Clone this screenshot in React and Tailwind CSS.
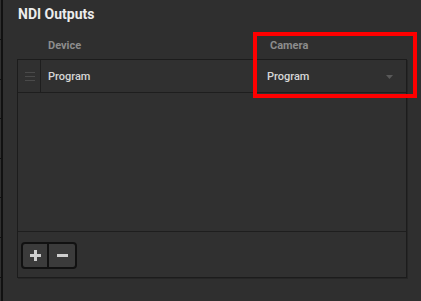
export default function App() {
  const ticks = [0, 1, 2, 3, 4, 5, 6];
  return (
    <div className="relative flex h-[301px] w-[421px] overflow-hidden bg-[#2f2f2f]" style={{ fontFamily: "Roboto, 'Liberation Sans', Arial, sans-serif" }}>
      {/* left edge strip */}
      <div className="flex w-[4px] flex-col border-r-2 border-[#111] pt-[39px]">
        {ticks.map((t) => (
          <div key={t} className="h-[39.6px] w-full shrink-0 border-t border-[#111]" />
        ))}
      </div>

      <div className="flex flex-1 flex-col pl-[14px] pr-[14px]">
        <div className="pt-[6px] pl-[1px] text-[14px] font-bold leading-[16px] text-[#ececec]">NDI Outputs</div>

        <div className="mt-[17px] flex h-[14px] text-[11px] font-bold leading-[14px] text-[#8c8c8c]">
          <div className="w-[241px] pl-[31px]">Device</div>
          <div className="pl-[12px]">Camera</div>
        </div>

        <div className="mt-[6px] flex h-[219px] w-[390px] flex-col border border-[#1c1c1c] bg-[#303030] shadow-[1px_1px_0_#262626]">
          <div className="flex h-[33px] border-b border-[#1e1e1e] text-[11px] font-medium text-[#d6d6d6]">
            <div className="flex w-[23px] flex-col items-center justify-center gap-[3px] border-r border-[#1e1e1e] pl-[1px]">
              <div className="h-[1px] w-[10px] bg-[#4a4a4a]" />
              <div className="h-[1px] w-[10px] bg-[#4a4a4a]" />
              <div className="h-[1px] w-[10px] bg-[#4a4a4a]" />
            </div>
            <div className="flex w-[216px] items-center pl-[7px] pt-[2px]">Program</div>
            <div className="flex flex-1 items-center justify-between pl-[10px] pr-[13px] pt-[2px]">
              <span>Program</span>
              <svg width="7" height="4" viewBox="0 0 7 4">
                <path d="M0 0 L7 0 L3.5 4 Z" fill="#595959" />
              </svg>
            </div>
          </div>
          <div className="flex-1 border-b border-[#1e1e1e]" />
          <div className="flex h-[45px] items-start pl-[3px] pt-[10px]">
            <div className="flex h-[27px] overflow-hidden rounded-[4px] border-2 border-[#111] bg-[#3b3b3b]">
              <div className="flex w-[26px] items-center justify-center border-r-2 border-[#111] text-[#cfcfcf]">
                <svg width="11" height="11" viewBox="0 0 11 11">
                  <rect x="4" y="0" width="3" height="11" fill="#cfcfcf" />
                  <rect x="0" y="4" width="11" height="3" fill="#cfcfcf" />
                </svg>
              </div>
              <div className="flex w-[26px] items-center justify-center">
                <svg width="11" height="3" viewBox="0 0 11 3">
                  <rect x="0" y="0" width="11" height="3" fill="#cfcfcf" />
                </svg>
              </div>
            </div>
          </div>
        </div>
      </div>

      {/* highlight overlay */}
      <div className="absolute left-[253px] top-[32px] h-[66px] w-[164px] border-4 border-[#ff0000]" />
    </div>
  );
}
